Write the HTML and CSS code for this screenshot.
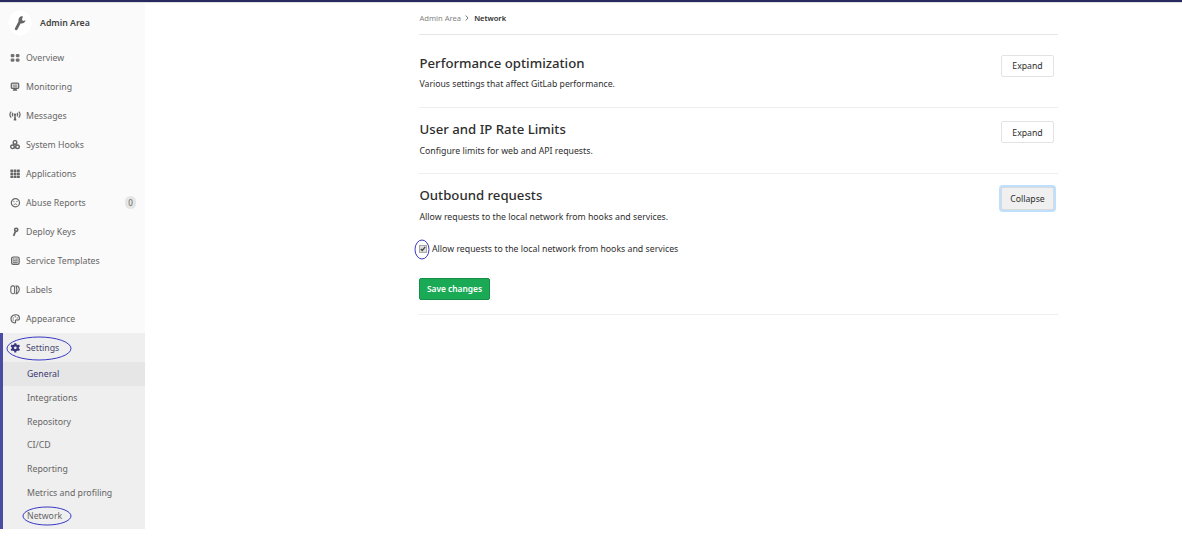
FILE: index.html
```html
<!DOCTYPE html>
<html lang="en">
<head>
<meta charset="utf-8">
<title>Network · Admin Area</title>
<link rel="stylesheet" href="styles.css">
</head>
<body>
<header class="topbar"></header>
<div class="layout">
  <nav class="sidebar">
    <div class="context">
      <span class="avatar"><svg width="12" height="16" viewBox="0 0 12 16"><path d="M2.2 13.8 5.8 7" stroke="#666" stroke-width="2.8" stroke-linecap="round"/><path d="M8.1 1C5.9 1.4 4.3 3 4.5 5.1l.2 1.6 2.2 1.8c2 .4 4.2-.9 4.7-3.2l-2.4.8-1.4-1.5 1.1-2.7z" fill="#666"/></svg></span>
      <span class="context-title">Admin Area</span>
    </div>
    <a class="item"><svg class="icon" viewBox="0 0 10 10"><g fill="#707070"><rect x=".7" y="1" width="3.7" height="3.3" rx="1.2"/><rect x="5.8" y="1" width="3.7" height="3.3" rx="1.2"/><rect x=".7" y="5.4" width="3.7" height="3.3" rx="1.2"/><rect x="5.8" y="5.4" width="3.7" height="3.3" rx="1.2"/></g></svg><span>Overview</span></a>
    <a class="item"><svg class="icon" viewBox="0 0 10 10"><rect x="1.3" y="1.2" width="7.4" height="5.2" rx="1.2" fill="#ddd" stroke="#666" stroke-width="1.3"/><path d="M3 3.2h4M3 4.8h4" stroke="#777" stroke-width=".8"/><path d="M2.6 8.8h4.8L6.4 6.8H3.6z" fill="#666"/></svg><span>Monitoring</span></a>
    <a class="item"><svg class="icon wide" viewBox="0 0 12 10"><g fill="none" stroke="#666" stroke-width="1.2"><path d="M2.2 .6Q-.4 3.6 2.2 6.6M9.8 .6q2.6 3 0 6M4 1.8q-1.3 1.8 0 3.6M8 1.8q1.3 1.8 0 3.6M6 4v5.5"/></g><path d="M6 5 7.5 9.3h-3z" fill="#666"/><circle cx="6" cy="3.6" r="1.2" fill="#666"/></svg><span>Messages</span></a>
    <a class="item"><svg class="icon" viewBox="0 0 10 10"><g fill="none" stroke="#666" stroke-width="1.4"><circle cx="5" cy="2.4" r="1.8"/><circle cx="2.5" cy="6.8" r="1.8"/><circle cx="7.5" cy="6.8" r="1.8"/><path d="M4.4 4 3.2 6M5.6 4l1.2 2M4 7.6h2"/></g></svg><span>System Hooks</span></a>
    <a class="item"><svg class="icon" viewBox="0 0 10 10"><g fill="#666"><rect x=".4" y=".4" width="2.8" height="2.5" rx=".5"/><rect x="3.7" y=".4" width="2.8" height="2.5" rx=".5"/><rect x="7" y=".4" width="2.8" height="2.5" rx=".5"/><rect x=".4" y="3.5" width="2.8" height="2.5" rx=".5"/><rect x="3.7" y="3.5" width="2.8" height="2.5" rx=".5"/><rect x="7" y="3.5" width="2.8" height="2.5" rx=".5"/><rect x=".4" y="6.6" width="2.8" height="2.5" rx=".5"/><rect x="3.7" y="6.6" width="2.8" height="2.5" rx=".5"/><rect x="7" y="6.6" width="2.8" height="2.5" rx=".5"/></g></svg><span>Applications</span></a>
    <a class="item"><svg class="icon" viewBox="0 0 10 10"><circle cx="5.4" cy="4.7" r="4.1" fill="none" stroke="#666" stroke-width="1.2"/><path d="M3.1 3.1l1.5.7M7.7 3.1l-1.5.7M3.7 6.7Q5.4 5 7.1 6.7" fill="none" stroke="#777" stroke-width=".9"/></svg><span>Abuse Reports</span><span class="badge">0</span></a>
    <a class="item"><svg class="icon" viewBox="0 0 10 10"><path d="M3.6 8.9 5.4 4.5M3.8 6.4l1.4.6" stroke="#666" stroke-width="1.8"/><circle cx="6.2" cy="2.8" r="1.6" fill="none" stroke="#666" stroke-width="1.6"/></svg><span>Deploy Keys</span></a>
    <a class="item"><svg class="icon" viewBox="0 0 10 10"><rect x="1.6" y="1" width="7.6" height="7.4" rx="1.6" fill="#ddd" stroke="#666" stroke-width="1.2"/><path d="M3 3h1.5M5.4 3h2.2M3 4.8h4.6M3 6.6h4.6" stroke="#666" stroke-width=".9"/></svg><span>Service Templates</span></a>
    <a class="item"><svg class="icon" viewBox="0 0 10 10"><path d="M2.4.9h1q1.2 0 1.2 1.4v5q0 1.4-1.2 1.4h-1Q.8 8.5.8 6.3V3.2Q.8 1 2.4.9zM6.1 1h1.6q1.8 1.8 1.6 3.8T7.1 8.6h-1Q7.5 5 6.1 1z" fill="none" stroke="#666" stroke-width="1.1"/></svg><span>Labels</span></a>
    <a class="item"><svg class="icon" viewBox="0 0 10 10"><path d="M4.9 8.9Q1.1 8.5 1 4.9T5.2.8 9.4 4.6Q9.2 6.4 7.4 6 5.3 5.5 5.5 7.1 5.8 9.1 4.9 8.9z" fill="none" stroke="#666" stroke-width="1.2"/><g fill="#707070"><circle cx="3.2" cy="3.9" r=".7"/><circle cx="5.2" cy="2.8" r=".7"/><circle cx="7.2" cy="3.9" r=".7"/><circle cx="3.2" cy="6" r=".7"/></g></svg><span>Appearance</span></a>
    <section class="active-group">
      <a class="item current"><svg class="icon" viewBox="0 0 10 10"><g stroke="#38347c" stroke-width="2"><path d="M5.3.2v9.2M1.1 2.5l8.4 4.6M9.5 2.5 1.1 7.1"/></g><circle cx="5.3" cy="4.8" r="2.8" fill="none" stroke="#38347c" stroke-width="1.5"/><circle cx="5.3" cy="4.8" r="1.4" fill="#efefef"/></svg><span>Settings</span>
        <svg class="mark mark-settings" viewBox="0 0 66 25"><ellipse cx="33" cy="12.5" rx="32" ry="11.5"/></svg></a>
      <a class="sub selected"><span>General</span></a>
      <a class="sub"><span>Integrations</span></a>
      <a class="sub"><span>Repository</span></a>
      <a class="sub short"><span>CI/CD</span></a>
      <a class="sub"><span>Reporting</span></a>
      <a class="sub"><span>Metrics and profiling</span></a>
      <a class="sub short"><span>Network</span>
        <svg class="mark mark-network" viewBox="0 0 50 20"><ellipse cx="25" cy="10" rx="24" ry="9"/></svg></a>
    </section>
  </nav>
  <main class="content">
    <div class="breadcrumb"><span class="crumb">Admin Area</span><svg width="4" height="6" viewBox="0 0 4 6"><path d="M.7.5 3 3 .7 5.5" fill="none" stroke="#777" stroke-width="1"/></svg><b class="crumb-here">Network</b></div>
    <section class="panel first">
      <div><h4>Performance optimization</h4><p class="tight">Various settings that affect GitLab performance.</p></div>
      <button class="btn">Expand</button>
    </section>
    <section class="panel">
      <div><h4>User and IP Rate Limits</h4><p>Configure limits for web and API requests.</p></div>
      <button class="btn raised">Expand</button>
    </section>
    <section class="panel open">
      <div>
        <h4>Outbound requests</h4><p>Allow requests to the local network from hooks and services.</p>
        <label class="check"><span class="box"><svg width="8" height="8" viewBox="0 0 8 8"><path d="M1.8 4 3.3 5.5 6.2 1.9" fill="none" stroke="#444" stroke-width="1.3"/></svg><svg class="mark mark-check" viewBox="0 0 16 21"><ellipse cx="8" cy="10.5" rx="7" ry="9.5"/></svg></span><span>Allow requests to the local network from hooks and services</span></label>
        <button class="save">Save changes</button>
      </div>
      <button class="btn raised focused">Collapse</button>
    </section>
  </main>
</div>
</body>
</html>
```
FILE: styles.css
```css
* { box-sizing: border-box; }
body { margin: 0; height: 548px; overflow: hidden; background: #fff; color: #2e2e2e; font-family: "Noto Sans", sans-serif; font-size: 8.76px; }
span, h4, p { white-space: nowrap; }
.topbar { height: 3px; background: #292961; border-bottom: 1px solid #dfdfdf; }
.layout { display: flex; align-items: flex-start; }
.sidebar { width: 145px; flex: none; background: #fafafa; color: #666; }
.context { height: 40px; display: flex; align-items: center; padding-left: 8px; gap: 8px; }
.avatar { width: 24px; height: 26px; border-radius: 50%; background: #fff; display: flex; align-items: center; justify-content: center; box-shadow: 0 0 1px #eee; }
.context-title { font-weight: 600; color: #444; }
.item { height: 29px; display: flex; align-items: center; padding-left: 10px; position: relative; }
.icon { width: 10px; height: 10px; margin-right: 6px; flex: none; }
.icon.wide { width: 12px; margin: 0 5px 0 -1px; }
.badge { margin: 0 9px 0 auto; width: 11px; height: 13px; line-height: 13px; border-radius: 6px; background: #e5e5e5; text-align: center; font-size: 8px; }
.active-group { height: 196px; background: #efefef; border-left: 3px solid #4b4ba3; }
.active-group .item { padding-left: 7px; color: #4a4a70; }
.sub { height: 24px; display: flex; align-items: center; padding-left: 24px; position: relative; }
.sub.short { height: 23px; padding-bottom: 1px; }
.selected { background: #e6e6e6; color: #393972; }
.mark { position: absolute; overflow: visible; fill: none; stroke: #3838c4; stroke-width: 1; }
.mark-settings { left: 2.5px; top: 2.5px; width: 66px; height: 25px; }
.mark-network { left: 18.5px; top: .5px; width: 50px; height: 20px; }
.mark-check { left: -5px; top: -6.5px; width: 16px; height: 21px; }
.content { width: 639px; margin-left: 274px; }
.breadcrumb { height: 32px; padding-bottom: 2px; display: flex; align-items: center; border-bottom: 1px solid #e5e5e5; font-size: 7.6px; }
.crumb { color: #858585; padding-left: .5px; }
.breadcrumb svg { margin: 0 5px 0 4px; }
.crumb-here { font-weight: 600; font-size: 7.5px; }
.panel { height: 66px; padding: 14px 4px 0 .5px; display: flex; justify-content: space-between; align-items: flex-start; border-bottom: 1px solid #eee; }
.panel.first { height: 73px; padding-top: 20px; }
.panel.open { height: 141px; }
h4 { margin: -1px 0 0; height: 17px; line-height: 17px; font-size: 13.2px; font-weight: 500; }
.first h4 { margin-top: 0; }
p { margin: 6px 0 0; height: 14px; line-height: 14px; }
.first p { margin-top: 5px; }
.tight { font-size: 8.68px; }
.btn { width: 53px; height: 22px; padding: 0; border: 1px solid #e3e3e3; border-radius: 2px; background: #fff; color: #2e2e2e; font: 8.7px "Noto Sans", sans-serif; }
.raised { margin-top: -1px; padding-top: 2px; }
.focused { height: 23px; padding-top: 1px; background: #f0f0f0; border-color: #dadada; box-shadow: 0 0 0 2px #bfdfff; }
.check { display: flex; align-items: center; height: 14px; margin-top: 18px; font-size: 8.75px; }
.box { width: 8px; height: 8px; margin-right: 5px; margin-left: -.5px; position: relative; background: #ddd; outline: 1px solid #aaa; outline-offset: -1px; }
.box > svg { display: block; }
.save { display: block; width: 71px; height: 22px; margin: 22px 0 0 -.5px; padding: 0 0 2px; border: 1px solid #168f48; border-radius: 2px; background: #1aaa55; color: #fff; font: 600 8.4px "Noto Sans", sans-serif; }
```
